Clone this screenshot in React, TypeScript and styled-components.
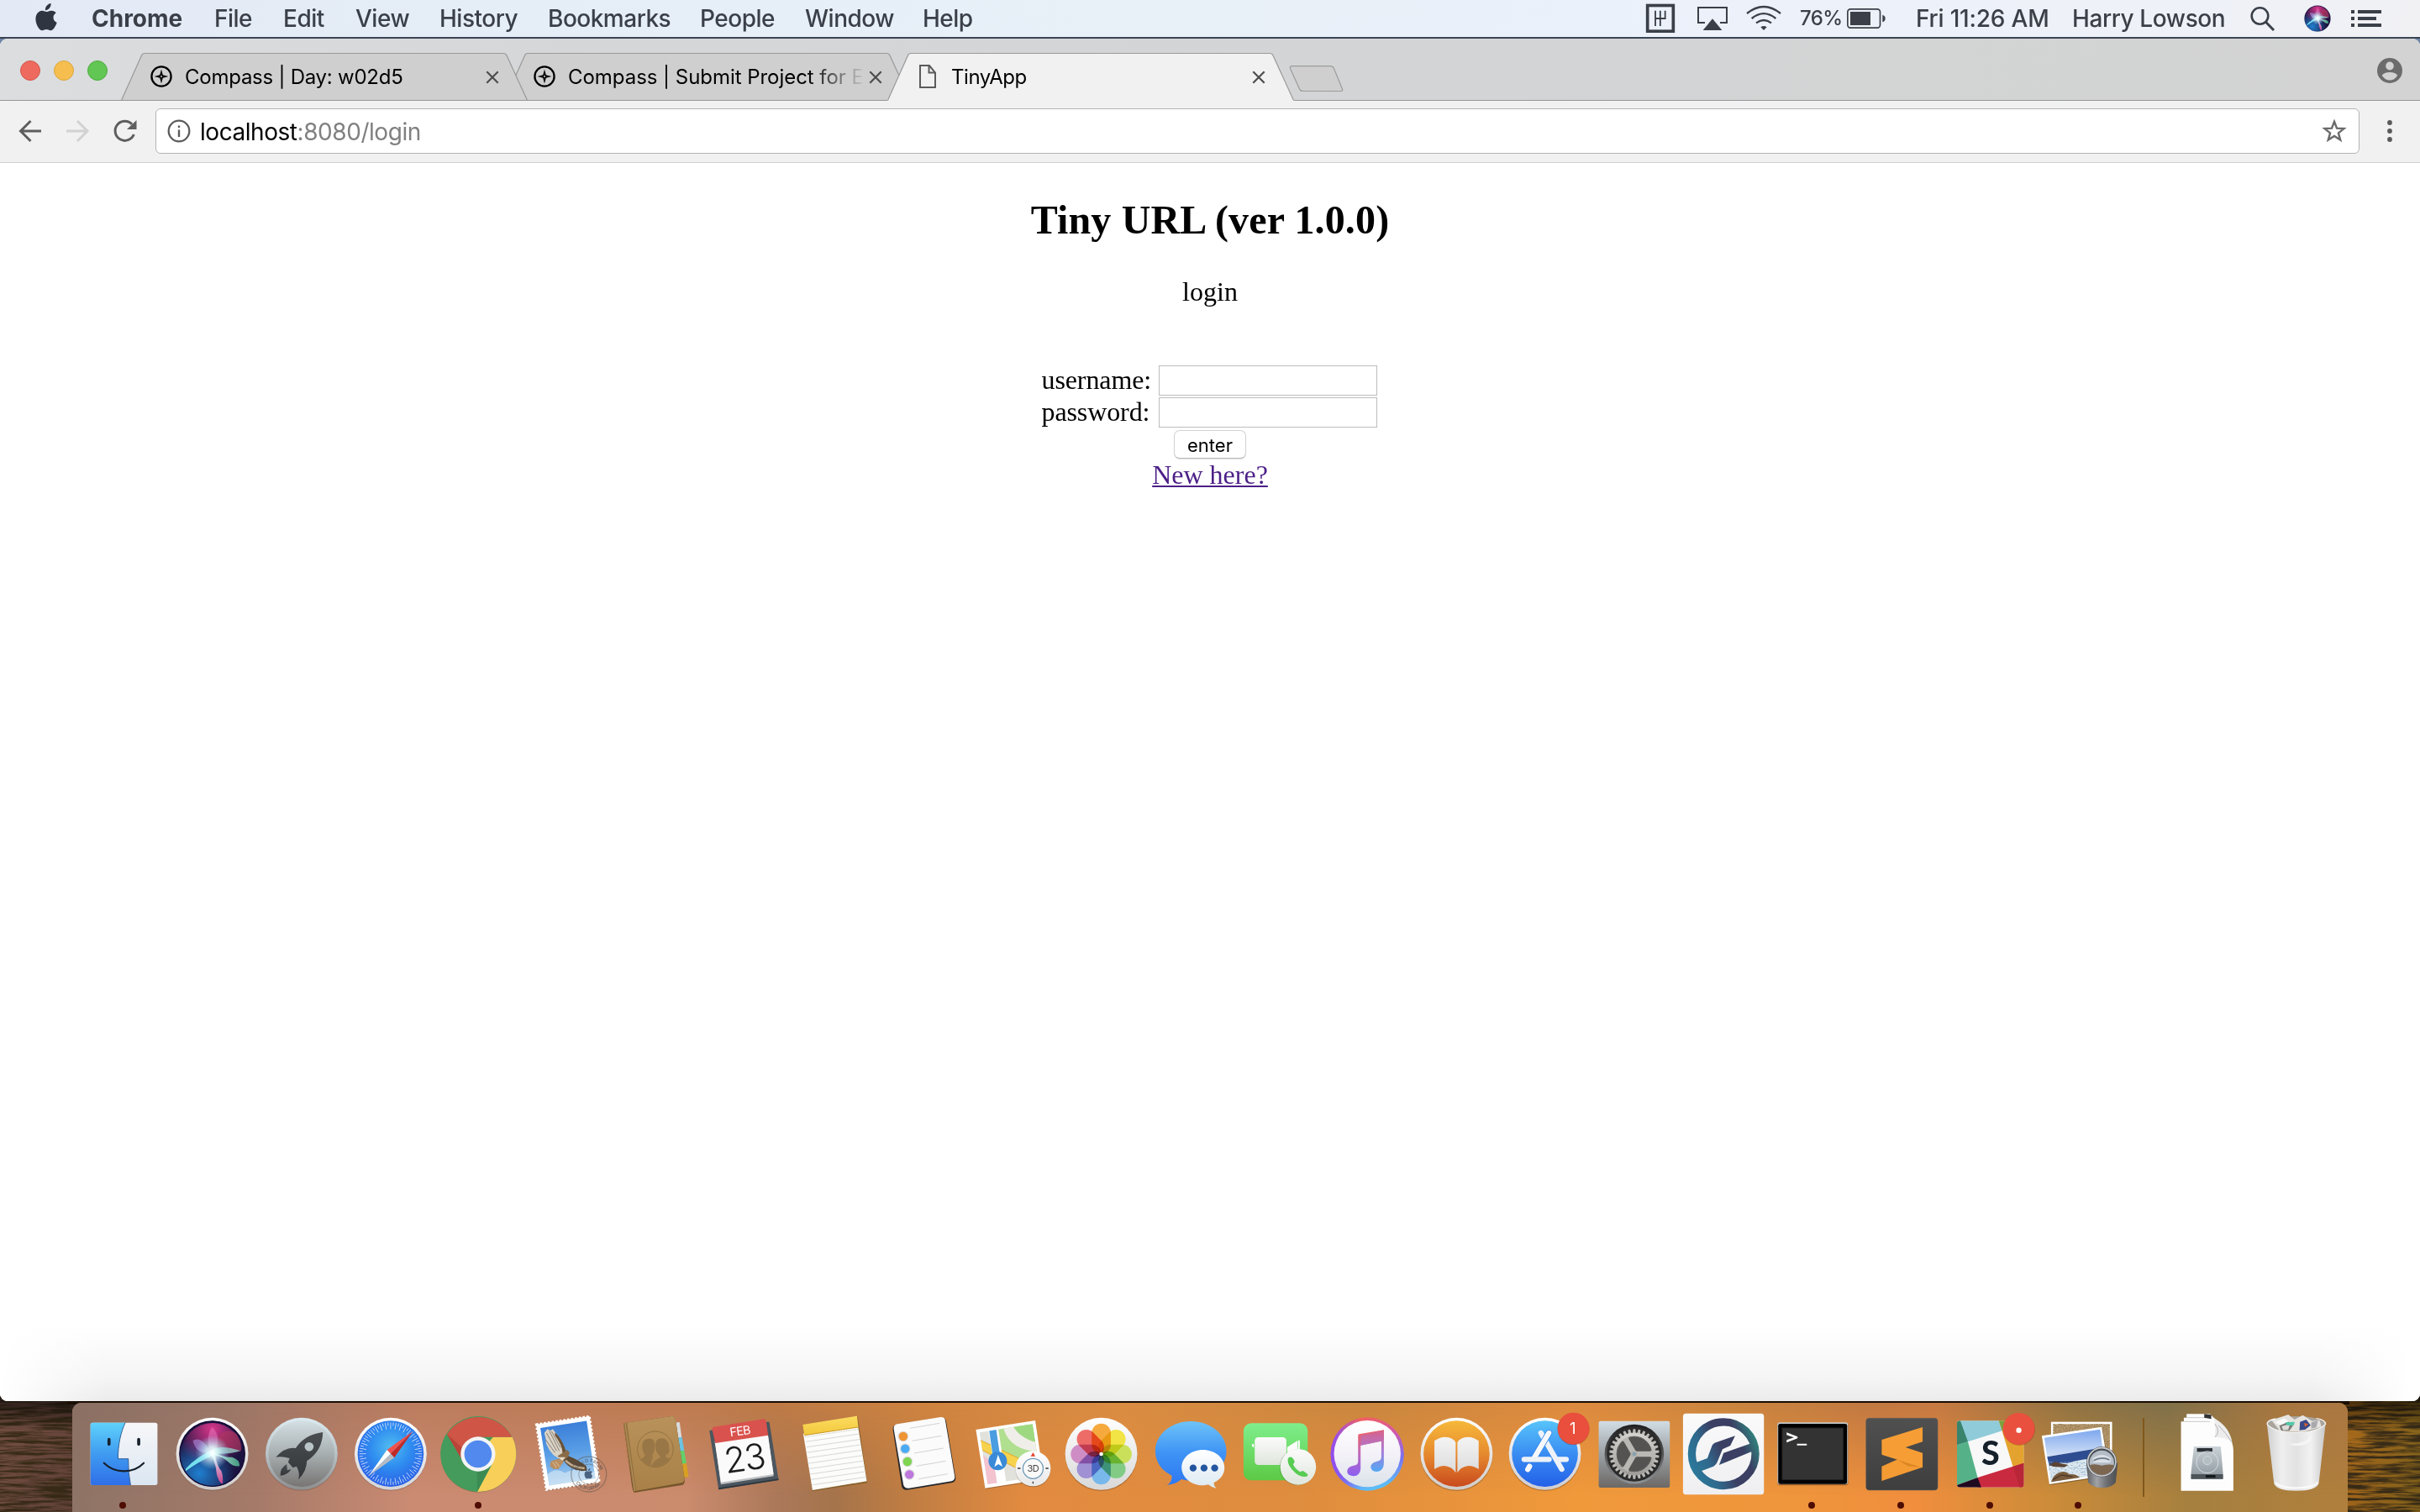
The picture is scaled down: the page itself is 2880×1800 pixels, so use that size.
import React from "react";
import styled, { createGlobalStyle } from "styled-components";

const ui = `Inter, "Liberation Sans", sans-serif`;
const serif = `"Liberation Serif", serif`;
const ink = "#3a3f48";

const Global = createGlobalStyle`
  *, *::before, *::after { box-sizing: border-box; }
  html, body { margin: 0; padding: 0; overflow: hidden; background: #2a1c14; }
  svg { display: block; overflow: visible; }
`;

const Desktop = styled.div`
  position: relative;
  width: 2880px;
  height: 1800px;
  overflow: hidden;
  display: flex;
  flex-direction: column;
  background: linear-gradient(90deg, #6f87a8 0, #1d2530 10%, #1d2530 90%, #6f87a8 100%) 0 0 / 100% 70px no-repeat, #1a0f08;
`;

const Wallpaper = styled.svg`
  position: absolute;
  left: 0;
  bottom: 0;
`;

/* ---------- menu bar ---------- */

const MenuBar = styled.header`
  position: relative;
  flex: none;
  height: 46px;
  display: flex;
  align-items: flex-start;
  background: linear-gradient(90deg, #e3eaf6 0, #e5edf6 20%, #e8f0f8 50%, #ecf1fa 72%, #eef1f8 90%, #f1f1f4 100%);
  border-bottom: 2px solid #3b4453;
  color: ${ink};
  font-family: ${ui};
  font-size: 28px;
  font-weight: 450;
  line-height: 44px;
  white-space: nowrap;
`;

const MenuLead = styled.div`
  flex: none;
  width: 109px;
  height: 44px;
  padding: 4px 0 0 42px;
`;

const MenuItem = styled.div<{ $w: number; $bold?: boolean }>`
  flex: none;
  width: ${(p) => p.$w}px;
  font-weight: ${(p) => (p.$bold ? 700 : 450)};
  letter-spacing: ${(p) => (p.$bold ? 0 : -0.5)}px;
`;

const Status = styled.div<{ $w: number; $size?: number; $ls?: number }>`
  flex: none;
  width: ${(p) => p.$w}px;
  height: 44px;
  font-size: ${(p) => p.$size ?? 28}px;
  letter-spacing: ${(p) => p.$ls ?? 0}px;
`;

const StatusArea = styled.div`
  display: flex;
  margin-left: auto;
`;

/* ---------- browser window ---------- */

const Window = styled.main`
  position: relative;
  flex: none;
  height: 1622px;
  display: flex;
  flex-direction: column;
  border-radius: 9px;
  overflow: hidden;
  background: #fff;
`;

const TabStrip = styled.div`
  flex: none;
  height: 74px;
  display: flex;
  align-items: flex-end;
  justify-content: space-between;
  background: linear-gradient(90deg, #dbdddf 0, #d5d6d8 25%, #d3d4d5 60%, #d2d3d2 100%);
  box-shadow: inset 0 -1px 0 #979797;
`;

const TrafficLights = styled.div`
  display: flex;
  gap: 16px;
  width: 144px;
  padding: 0 0 24px 24px;
`;

const Light = styled.span<{ $fill: string; $edge: string }>`
  width: 24px;
  height: 24px;
  border-radius: 50%;
  background: ${(p) => p.$fill};
  border: 1px solid ${(p) => p.$edge};
`;

const Tabs = styled.div`
  display: flex;
  align-items: flex-end;
  margin-right: auto;
`;

const Tab = styled.div<{ $z: number }>`
  position: relative;
  z-index: ${(p) => p.$z};
  width: 484px;
  height: 57px;
  margin-right: -28px;
  display: flex;
  align-items: center;
  font-family: ${ui};
  font-size: 24px;
  font-weight: 420;
  line-height: 58px;
  color: #000;
`;

const TabShape = styled.svg`
  position: absolute;
  inset: 0;
`;

const Favicon = styled.div`
  position: relative;
  flex: none;
  width: 41px;
  margin-left: 35px;
`;

const TabTitle = styled.div<{ $fade?: boolean; $ls: number }>`
  position: relative;
  flex: none;
  width: 350px;
  white-space: nowrap;
  letter-spacing: ${(p) => p.$ls}px;
  ${(p) => (p.$fade ? "mask-image: linear-gradient(90deg, #000 285px, transparent 354px);" : "")}
`;

const TabClose = styled.svg`
  position: relative;
  flex: none;
  margin-left: 8px;
`;

const NewTab = styled.svg`
  margin: 0 0 10px 22px;
`;

const Profile = styled.div`
  padding: 0 21px 21px 0;
`;

const Toolbar = styled.div`
  flex: none;
  height: 74px;
  display: flex;
  align-items: center;
  padding: 0 0 2px 0;
  background: #f1f1f1;
  border-bottom: 1px solid #d0d0d0;
`;

const NavButton = styled.div<{ $w: number }>`
  flex: none;
  width: ${(p) => p.$w}px;
`;

const Omnibox = styled.div`
  flex: none;
  width: 2623px;
  height: 54px;
  display: flex;
  align-items: center;
  padding: 0 14px 0 13px;
  border: 1px solid #b4b4b4;
  border-radius: 6px;
  background: #fff;
  font-family: ${ui};
  font-size: 28px;
  font-weight: 420;
  letter-spacing: -0.45px;
  color: #000;
`;

const Address = styled.div`
  flex: 1;
  padding: 2px 0 0 11px;
`;

const Muted = styled.span`
  color: #808080;
`;

const Page = styled.section`
  flex: 1;
  display: flex;
  flex-direction: column;
  align-items: center;
  font-family: ${serif};
  font-size: 32px;
  color: #000;
  background: linear-gradient(90deg, #fff 0, rgba(255, 255, 255, 0) 130px, rgba(255, 255, 255, 0) 2750px, #fff 2870px),
    linear-gradient(180deg, #fff 0, #fff calc(100% - 90px), #f5f5f5 calc(100% - 28px), #ebebeb 100%);
`;

const Title = styled.h2`
  margin: 40px 0 0;
  font-size: 48px;
  line-height: 56px;
  font-weight: 700;
  letter-spacing: 0.15px;
`;

const Lead = styled.p`
  margin: 39px 0 69px;
  line-height: 36px;
`;

const Form = styled.form`
  display: flex;
  flex-direction: column;
  align-items: center;
`;

const FieldRow = styled.label`
  display: flex;
  align-items: center;
  height: 38px;
  line-height: 36px;
`;

const FieldName = styled.span`
  width: 139px;
  padding-bottom: 3px;
  letter-spacing: -0.1px;
  text-align: left;
  white-space: nowrap;
`;

const Input = styled.input`
  width: 260px;
  height: 36px;
  margin: 0 2px 0 0;
  padding: 0;
  border: 1px solid #bdbdbd;
  border-radius: 0;
  background: #fff;
  outline: none;
`;

const Submit = styled.button`
  width: 86px;
  height: 34px;
  margin: 2px 0 0;
  padding: 0;
  border: 1px solid #d2d2d2;
  border-bottom-color: #b8b8b8;
  border-radius: 7px;
  background: #fff;
  box-shadow: 0 1px 1px rgba(0, 0, 0, 0.12);
  font-family: ${ui};
  font-size: 22px;
  font-weight: 400;
  line-height: 34px;
  color: #000;
`;

const Link = styled.a`
  margin-top: 1px;
  line-height: 36px;
  color: #4b1f87;
  text-decoration: underline;
  text-decoration-thickness: 2px;
  text-underline-offset: 2px;
`;

/* ---------- dock ---------- */

const Dock = styled.nav`
  position: relative;
  flex: none;
  width: 2708px;
  height: 130px;
  margin: 2px 0 0 86px;
  padding-left: 7.6px;
  display: flex;
  border-radius: 11px 11px 0 0;
  overflow: hidden;
  background: linear-gradient(90deg, #8e7466 0, #a57a69 8%, #cb8b73 15%, #cb8b6d 27%, #ab785a 31%, #a5744b 33.5%, #ba7b44 36%, #e38b40 42%, #df8d3e 54%, #f0993b 66%, #ef953c 76%, #f08e3d 81%, #cc8c39 87%, #a6803f 93%, #b07f3d 100%);

  &::before {
    content: "";
    position: absolute;
    inset: 0;
    background: linear-gradient(90deg, #8a7063 0, #9b7667 7%, #bb7c5e 15%, #be7b50 27%, #bd7a45 31%, #cf8440 38%, #d98c42 46%, #c9863f 57%, #dc8a3f 66%, #c8843f 73%, #c07842 79%, #c57a42 82%, #8f7343 88%, #80704a 92%, #a67640 97%, #ab7742 100%);
    mask-image: linear-gradient(180deg, #000 0, transparent 85%);
  }
`;

const DockSlot = styled.div`
  position: relative;
  flex: none;
  width: 105.8px;
  height: 130px;
`;

const Running = styled.span`
  position: absolute;
  left: 48.2px;
  bottom: 4px;
  width: 8px;
  height: 8px;
  border-radius: 50%;
  background: #4e0d02;
`;

const Divider = styled.div`
  position: relative;
  flex: none;
  width: 2px;
  height: 94px;
  margin: 18px 22.3px 0 22.8px;
  background: #80581c;
`;

/* ---------- menu bar glyphs ---------- */

const applePath =
  "M18.6 0c.3 2.200-.6 4.300-1.800 5.800-1.200 1.500-3.100 2.500-4.900 2.400-.3-2.100.7-4.200 1.800-5.500C15 1.200 17 .2 18.600 0zM24.800 11.300c-2.200 1.400-3.300 3.200-3.300 5.500 0 2.700 1.500 5 4.200 6.200-.6 1.900-1.500 3.700-2.700 5.400-1.300 1.900-2.600 3.800-4.700 3.800-2 .1-2.700-1.200-5-1.200-2.400 0-3.100 1.200-5 1.200-2.100.1-3.600-1.900-4.900-3.800C.600 24.400-.9 17.100 2 12.500c1.400-2.300 3.700-3.700 6.200-3.700 2 0 3.900 1.300 5.200 1.300 1.200 0 3.500-1.600 6-1.400 1.700.1 4 .7 5.400 2.600z";

const Apple = () => (
  <svg width="27" height="33" viewBox="0 0 27 33" fill="#2f3541">
    <path d={applePath} />
  </svg>
);

const StatusGlyphs = () => (
  <svg width="183" height="44" viewBox="0 0 549 132" fill="none" stroke={ink}>
    <rect x="62" y="19.500" width="92" height="92" strokeWidth="11" />
    <path d="M90 38v55M107.500 38v55M125 38v28H90" strokeWidth="5.500" />
    <path d="M267 81H243V27H345V81H321" strokeWidth="6" />
    <path d="M294 67L328 108H260Z" fill={ink} stroke="none" />
    <path d="M417 48Q477 0 537 48M434 66Q477 31 520 66M450 82Q477 62 504 82" strokeWidth="7" />
    <path d="M466 97Q477 89 488 97L477 108Z" fill={ink} stroke="none" />
  </svg>
);

const Battery = () => (
  <svg width="46" height="44" viewBox="0 0 138 132">
    <rect x="2.500" y="32.500" width="116" height="67" rx="10" fill="none" stroke={ink} strokeWidth="5" />
    <rect x="12" y="42" width="72" height="48" fill={ink} />
    <path d="M127 53Q137 56 137 66Q137 76 127 79Z" fill={ink} />
  </svg>
);

const Search = () => (
  <svg width="30" height="44" viewBox="0 0 30 44" fill="none" stroke={ink} strokeWidth="2.600">
    <circle cx="11.500" cy="19" r="9.800" />
    <path d="M18.300 26L28 36" strokeWidth="3" />
  </svg>
);

const MenuList = () => (
  <svg width="36" height="44" viewBox="0 0 36 44" fill={ink}>
    <path d="M0 12h4v4H0zM8 12h28v4H8zM0 20h4v4H0zM8 20h22v4H8zM0 28h4v4H0zM8 28h28v4H8z" />
  </svg>
);

/* ---------- browser glyphs ---------- */

const Compass = () => (
  <svg width="26" height="27" viewBox="-13 -13 26 27">
    <circle r="11.600" fill="none" stroke="#000" strokeWidth="2.300" />
    <path d="M0-8.500L1.800-1.800L8.500 0L1.800 1.800L0 8.500L-1.800 1.800L-8.500 0L-1.800-1.800Z" />
    <circle r="1" fill="#cfcfcf" />
  </svg>
);

const Doc = () => (
  <svg width="26" height="29" viewBox="-3 0 26 29" fill="none" stroke="#5b5b5b" strokeWidth="2">
    <path d="M1 1H12L19 9.500V27H1ZM11.500 1V9.500H19" />
  </svg>
);

const Cross = () => (
  <TabClose width="16" height="16" viewBox="0 0 16 16" stroke="#4d4d4d" strokeWidth="2.200">
    <path d="M1.300 1.300L14.700 14.700M14.700 1.300L1.300 14.700" />
  </TabClose>
);

const TabBody = ({ active }: { active?: boolean }) => (
  <TabShape width="484" height="57" viewBox="0 0 484 57">
    <path
      d="M0 57L1 55L24.500 3Q25.500 .5 28 .5H455Q458 .5 459 3L483 55L484 57Z"
      fill={active ? "#f1f1f1" : "#cfcfcf"}
    />
    <path
      d="M.5 56.500L24.500 3Q25.500 .5 28 .5H455Q458 .5 459 3L483.500 56.500"
      fill="none"
      stroke="#999"
      strokeWidth="1.200"
    />
    {!active && <path d="M0 56.500H484" stroke="#979797" />}
  </TabShape>
);

const Star = () => (
  <svg width="30" height="30" viewBox="0 0 30 30" fill="none" stroke="#6a6a6a" strokeWidth="2.400">
    <path d="M15 3.800L18 11.700L26.500 12.100L19.900 17.400L22.200 25.600L15 20.900L7.800 25.600L10.100 17.400L3.500 12.100L12 11.700Z" />
  </svg>
);

/* ---------- dock icons ---------- */

const IconSvg = styled.svg`
  position: relative;
`;

type IconProps = { cx: number; children: React.ReactNode };

const Icon = ({ cx, children }: IconProps) => (
  <IconSvg width="105.8" height="130" viewBox={`${cx - 158.7} 90 317.4 390`}>
    {children}
  </IconSvg>
);

const Stops = ({ c }: { c: string[] }) => (
  <>
    {c.map((color, i) => (
      <stop key={i} offset={i / (c.length - 1)} stopColor={color} />
    ))}
  </>
);

const V = ({ id, c }: { id: string; c: string[] }) => (
  <linearGradient id={id} x1="0" y1="0" x2="0" y2="1">
    <Stops c={c} />
  </linearGradient>
);

const Finder = () => (
  <Icon cx={439.5}>
    <V id="fa" c={["#5fd2fb", "#3f9bf0", "#2f6fe9"]} />
    <V id="fb" c={["#f7f7f9", "#dbe6f2"]} />
    <rect x="322" y="161" width="239" height="223" rx="8" fill="url(#fb)" />
    <path d="M330 161H446C430 195 420 240 420 290H457Q456 340 465 384H330Q322 384 322 376V169Q322 161 330 161Z" fill="url(#fa)" />
    <path d="M446 161C430 195 420 240 420 290H457Q456 340 465 384" fill="none" stroke="#1e4b80" strokeWidth="2.500" />
    <path d="M388 221V238M494 221V238" stroke="#16202c" strokeWidth="11" strokeLinecap="round" />
    <path d="M370 305Q400 334 441 334Q484 334 512 305" fill="none" stroke="#16202c" strokeWidth="6.500" strokeLinecap="round" />
  </Icon>
);

const SiriArt = () => (
  <>
    <defs>
      <radialGradient id="s1" cx=".5" cy=".1" r=".6"><stop offset="0" stopColor="#d8368a" /><stop offset="1" stopColor="#d8368a" stopOpacity="0" /></radialGradient>
      <radialGradient id="s2" cx=".3" cy=".8" r=".55"><stop offset="0" stopColor="#1f7fd0" /><stop offset="1" stopColor="#1f7fd0" stopOpacity="0" /></radialGradient>
      <radialGradient id="s3" cx=".5" cy=".48" r=".26"><stop offset="0" stopColor="#fff" /><stop offset=".35" stopColor="#dff" stopOpacity=".8" /><stop offset="1" stopColor="#9df" stopOpacity="0" /></radialGradient>
      <linearGradient id="s4" x1="0" x2="1"><stop offset="0" stopColor="#d8fff8" /><stop offset="1" stopColor="#47a886" /></linearGradient>
      <linearGradient id="s5" x1="0" y1="0" x2="0" y2="1"><stop offset="0" stopColor="#fff" /><stop offset="1" stopColor="#d5408f" /></linearGradient>
    </defs>
    <circle cx="759" cy="272" r="117" fill="#1c1440" />
    <circle cx="759" cy="272" r="117" fill="url(#s2)" />
    <circle cx="759" cy="272" r="110" fill="url(#s1)" />
    <path d="M759 268C770 210 800 170 845 200Q865 230 862 262Q810 275 759 268Z" fill="#b0355f" opacity=".65" />
    <path d="M755 268Q700 275 690 225Q720 205 755 268Z" fill="#a890e0" opacity=".6" />
    <path d="M757 268C735 235 745 190 760 178C785 200 785 240 764 270Z" fill="#e070b8" opacity=".6" />
    <path d="M664 326Q700 285 760 258L766 276Q710 300 664 334Z" fill="#7ff0f5" opacity=".9" />
    <path d="M760 266Q800 285 830 284Q860 295 856 316Q835 320 815 300Q795 280 756 276Z" fill="url(#s4)" opacity=".9" />
    <path d="M760 255Q800 240 860 262Q820 275 760 272Z" fill="#8feee0" opacity=".65" />
    <path d="M750 270Q772 300 775 345Q782 375 796 380Q800 340 785 325Q772 300 768 268Z" fill="url(#s5)" opacity=".9" />
    <circle cx="759" cy="272" r="117" fill="url(#s3)" />
  </>
);

const Siri = () => (
  <Icon cx={757}>
    <V id="sr" c={["#fff", "#cfcbc9"]} />
    <circle cx="759" cy="275" r="129" fill="#5b4038" opacity=".35" />
    <circle cx="759" cy="272" r="129" fill="url(#sr)" />
    <SiriArt />
    <circle cx="759" cy="272" r="116" fill="none" stroke="#140a36" strokeWidth="4" />
  </Icon>
);

const Launchpad = () => (
  <Icon cx={1074}>
    <V id="lr" c={["#dcebf2", "#b9c3c7", "#8e8e8e"]} />
    <V id="lf" c={["#d3dfe3", "#a8afb1", "#777573"]} />
    <V id="lk" c={["#4a4e51", "#34373a"]} />
    <circle cx="1077" cy="275" r="129" fill="#5b4038" opacity=".35" />
    <circle cx="1077" cy="272" r="129" fill="url(#lr)" />
    <circle cx="1077" cy="272" r="118" fill="url(#lf)" />
    <path d="M1153 195C1110 200 1075 222 1056 252Q1020 245 985 284Q1008 280 1034 288L1029 302L1046 322L1059 317Q1072 340 1066 364Q1095 335 1096 298C1132 275 1152 240 1153 195Z" fill="url(#lk)" />
    <path d="M1024 309Q1000 322 1001 350Q1028 348 1040 327L1026 331Z" fill="url(#lk)" />
    <circle cx="1104" cy="247" r="16" fill="#b8c4c8" />
  </Icon>
);

const Safari = () => (
  <Icon cx={1392}>
    <V id="sf" c={["#fff", "#d5d5d8"]} />
    <radialGradient id="sg" cx=".5" cy=".4" r=".6"><Stops c={["#52bdf0", "#2f8df0", "#2a5fe6"]} /></radialGradient>
    <circle cx="1395" cy="275" r="129" fill="#5b4038" opacity=".35" />
    <circle cx="1395" cy="272" r="129" fill="url(#sf)" />
    <circle cx="1395" cy="272" r="118" fill="url(#sg)" />
    {Array.from({ length: 72 }, (_, i) => (
      <path key={i} d={`M1395 160V${i % 2 ? 172 : 184}`} stroke="#e6f2ff" strokeWidth="2.600" opacity=".85" transform={`rotate(${i * 5} 1395 272)`} />
    ))}
    <path d="M1474 192L1382 258L1395 272Z" fill="#f2524c" />
    <path d="M1474 192L1408 286L1395 272Z" fill="#c22a25" />
    <path d="M1316 352L1382 258L1395 272Z" fill="#fff" />
    <path d="M1316 352L1408 286L1395 272Z" fill="#b9bcc2" />
  </Icon>
);

const Chrome = () => (
  <Icon cx={269}>
    <circle cx="267" cy="276" r="134" fill="#5b3020" opacity=".3" />
    <circle cx="267" cy="273" r="135" fill="#449b5c" />
    <path d="M267 273L320 212H388Q402 240 402 273A135 135 0 0 1 263 408L318 303Z" fill="#f7cf59" />
    <path d="M263 408L316 310L267 320L225 300L236 340Z" fill="#449b5c" />
    <path d="M155 202A135 135 0 0 1 387 212H267L208 292Z" fill="#cf5546" />
    <path d="M155 202L208 292L214 255Z" fill="#b94438" />
    <path d="M263 408L318 303L300 325L262 338Z" fill="#37804c" opacity=".6" />
    <circle cx="266" cy="273" r="62" fill="#f4f4f4" />
    <circle cx="266" cy="273" r="49" fill="#5189ee" />
  </Icon>
);

const Mail = () => (
  <Icon cx={586.5}>
    <V id="ma" c={["#3b7fd9", "#5a9fe6", "#a5cdee"]} />
    <g transform="translate(586 272) rotate(-8.700)">
      <rect x="-98" y="-118" width="196" height="238" fill="#4a2a1a" opacity=".25" />
      <rect x="-96" y="-121" width="193" height="237" fill="#fff" stroke="#fff" strokeWidth="7" strokeDasharray="8 6" />
      <rect x="-83" y="-106" width="167" height="208" fill="url(#ma)" />
      <path d="M-83 62Q-50 40-20 66Q20 50 84 78V102H-83Z" fill="#dcebf6" opacity=".6" />
    </g>
    <path d="M513 184L502 198L507 216L509 236L520 258L534 276L552 288L580 268Q572 236 550 206L532 184L524 190Z" fill="#d9d3c8" />
    <path d="M540 196L552 208Q572 236 580 264L568 272Q566 240 540 206Z" fill="#6a5238" />
    <path d="M510 198L546 262M520 190L556 262M507 222L540 268M528 192L560 250" stroke="#8b7f70" strokeWidth="3" />
    <path d="M570 294Q584 318 612 328L636 334L655 332L652 316Q624 294 588 280Z" fill="#5d4a35" />
    <path d="M578 296Q596 314 620 320L646 324" fill="none" stroke="#c0ad90" strokeWidth="8" />
    <path d="M560 288L526 298L522 316L534 326L552 327L572 300Z" fill="#b98f62" />
    <path d="M532 302L546 322M542 300L556 318" stroke="#e2c49c" strokeWidth="3" />
    <path d="M550 280L572 266L584 258L593 268L586 284L566 300Z" fill="#8a6b48" />
    <path d="M552 284L578 284L566 298Z" fill="#e6dccb" />
    <g fill="none" stroke="#55504e" opacity=".45">
      <circle cx="661" cy="345" r="63" strokeWidth="4" />
      <circle cx="661" cy="345" r="36" strokeWidth="3" />
      <path id="cal" d="M618 345A43 43 0 1 1 704 345" stroke="none" />
      <path id="cal2" d="M605 345A56 56 0 0 0 717 345" stroke="none" />
    </g>
    <g fill="#47474c" opacity=".6" fontFamily={ui} fontWeight="700" fontSize="17">
      <text><textPath href="#cal" startOffset="12">HELLO FROM</textPath></text>
      <text><textPath href="#cal2" startOffset="32">CALIFORNIA</textPath></text>
    </g>
    <path d={applePath} transform="translate(645 324) scale(1.150)" fill="#2d4566" opacity=".8" />
  </Icon>
);

const Contacts = () => (
  <Icon cx={904}>
    <V id="ca" c={["#b8925a", "#a88048"]} />
    <path d="M975 160L988 160L995 213L982 216Z" fill="#d9dbdc" />
    <path d="M982 214L996 212L1004 260L988 264Z" fill="#6cc3e2" />
    <path d="M988 262L1004 260L1012 306L994 310Z" fill="#63cf6b" />
    <path d="M994 309L1012 306L1020 354L1000 358Z" fill="#d9a022" />
    <path d="M787 163L958 138Q970 137 973 150L1006 366Q1007 380 996 384L826 411Q820 405 817 385Z" fill="#76562c" />
    <path d="M787 163L958 138Q970 137 973 150L1005 360Q1006 372 994 376L824 406Z" fill="url(#ca)" />
    <path d="M787 163L800 161L833 404L824 406Z" fill="#94713f" />
    <path d="M793 162L828 405" stroke="#b8935c" strokeWidth="3" />
    <circle cx="901" cy="256" r="64" fill="none" stroke="#94723f" strokeWidth="3" />
    <clipPath id="cc"><circle cx="901" cy="256" r="62" /></clipPath>
    <g clipPath="url(#cc)" fill="#987646">
      <path d="M876 218Q900 216 900 244Q898 268 890 276L892 286Q886 296 884 320H838V296Q862 288 864 276Q854 262 854 244Q854 220 876 218Z" />
      <path d="M902 250Q898 216 926 217Q950 220 950 252Q954 268 944 274L938 276L938 284Q960 290 970 296V330H886Q884 300 918 286L914 276Q903 268 902 250Z" />
    </g>
  </Icon>
);

const Calendar = () => (
  <Icon cx={1221}>
    <path d="M1093 190L1104 187L1300 158H1307L1340 366L1126 400Z" fill="#4c565f" />
    <path d="M1126 400L1340 366V361L1125 394Z" fill="#2e3840" />
    <path d="M1114 232L1302 206L1322 345V352L1134 382Z" fill="#bfc0c2" />
    <path d="M1112 228L1302 203L1322 345L1134 374Z" fill="#fafafa" />
    <path d="M1103 186Q1102 177 1110 176L1286 148Q1293 147 1295 153L1303 206L1114 234Z" fill="#d9524e" />
    <g fontFamily={ui} textAnchor="middle" transform="translate(1216 275) rotate(-8)">
      <text x="-2" y="-70" fontSize="43" letterSpacing="-2" fill="#fff">FEB</text>
      <text x="0" y="58" fontSize="126" fontWeight="300" letterSpacing="-4" fill="#1c1c1c">23</text>
    </g>
  </Icon>
);

const Notes = () => (
  <Icon cx={219}>
    <V id="na" c={["#fbdc60", "#f3c83c"]} />
    <path d="M106 170L112 210L141 406L337 376L303 140Z" fill="#7a5a20" opacity=".7" />
    <path d="M108 200L304 176L335 370L141 402Z" fill="#fcfcfa" />
    <path d="M106 168L300 137L305 176L112 206Z" fill="url(#na)" />
    <path d="M112 206L305 177" stroke="#c8971d" strokeWidth="3" />
    <path d="M114 212L306 184" stroke="#a8a08c" strokeWidth="2.500" strokeDasharray="2.500 4" />
    {[0, 1, 2, 3, 4, 5, 6, 7, 8].map((i) => (
      <path key={i} d={`M${117 + i * 2.7} ${229 + i * 19.3}L${309 + i * 2.7} ${201 + i * 19.3}`} stroke="#c4c4c4" strokeWidth="2" />
    ))}
  </Icon>
);

const Reminders = () => (
  <Icon cx={536}>
    <path d="M440 168L602 143Q614 143 617 155L651 358Q652 370 640 375L478 401Q463 402 459 390L427 185Q426 172 440 168Z" fill="#26282c" />
    <path d="M443 166L598 141Q611 140 614 152L648 353Q649 366 637 370L484 395Q469 396 465 384L430 182Q430 168 443 166Z" fill="#fbfbfb" />
    {[
      ["#ef9433", 464, 210],
      ["#4aaaf3", 471, 254],
      ["#7fd551", 479, 300],
      ["#bd77dd", 486, 346],
    ].map(([c, x, y]) => (
      <g key={c as string}>
        <circle cx={x} cy={y} r="19" fill="#dcdcdc" />
        <circle cx={x} cy={y} r="15.500" fill={c as string} />
        <path d={`M${+x + 32} ${+y + 16}l105-18`} stroke="#bdbdbd" strokeWidth="2" />
      </g>
    ))}
    <path d="M488 181L594 163" stroke="#bdbdbd" strokeWidth="2" />
  </Icon>
);

const Maps = () => (
  <Icon cx={853.5}>
    <path d="M725 188L935 156L966 366L757 398Z" fill="#5a3a18" opacity=".4" />
    <path d="M723 186L935 153L966 362L756 395Z" fill="#fff" />
    <clipPath id="mc"><path d="M736 196L925 166L953 352L765 381Z" /></clipPath>
    <g clipPath="url(#mc)">
      <rect x="720" y="150" width="250" height="250" fill="#e2e2dc" />
      <path d="M800 160H970V300H870L815 260Z" fill="#b1df90" />
      <path d="M822 184Q850 270 970 264V234Q890 236 855 160Z" fill="#f0eee8" />
      <path d="M855 170Q880 225 970 234V150H850Z" fill="#9ed982" />
      <path d="M740 270L790 310L800 400H750Z" fill="#f3c3cf" />
      <path d="M736 222L880 290V330L740 256Z" fill="#f7d24c" stroke="#e0aa30" strokeWidth="3" />
      <path d="M766 180L800 380L832 380L802 180Z" fill="#fff" />
      <path d="M770 185L795 182L808 270H782Z" fill="#4a9de0" />
    </g>
    <circle cx="801" cy="298" r="33" fill="#3a8ad8" />
    <path d="M802 275L818 318L803 309L789 319Z" fill="#fff" />
    <circle cx="927" cy="328" r="63" fill="#5a3a18" opacity=".4" />
    <V id="mv" c={["#fff", "#e8e8e8"]} />
    <circle cx="927" cy="325" r="63" fill="url(#mv)" />
    <circle cx="927" cy="325" r="36" fill="#fafafa" stroke="#6f9ab8" strokeWidth="4" />
    <path d="M927 267L935 281H919Z" fill="#e8402c" />
    <path d="M872 324H882M972 324H982M927 371V379" stroke="#333" strokeWidth="4" />
    <text x="927" y="337" fontFamily={ui} fontSize="33" letterSpacing="-1.500" textAnchor="middle" fill="#444">3D</text>
  </Icon>
);

const petals = ["#f6aa3e", "#f1e444", "#cbe05a", "#82cb84", "#78b8ea", "#a090d4", "#cf8dc5", "#ee6c68"];

const PhotoGroup = styled.g`
  isolation: isolate;
`;

const Petal = styled.rect`
  mix-blend-mode: multiply;
`;

const Photos = () => (
  <Icon cx={1171}>
    <V id="pa" c={["#fff", "#d8d8d8"]} />
    <circle cx="1173" cy="276" r="129" fill="#5a3a18" opacity=".35" />
    <circle cx="1173" cy="272" r="129" fill="url(#pa)" />
    <PhotoGroup>
      {petals.map((c, i) => (
        <Petal key={c} x="1139" y="164" width="68" height="109" rx="34" fill={c} transform={`rotate(${i * 45} 1173 273)`} />
      ))}
    </PhotoGroup>
    <circle cx="1173" cy="273" r="7" fill="#fff" />
  </Icon>
);

const Messages = () => (
  <Icon cx={228}>
    <V id="mg" c={["#6ec3f8", "#3e93f5", "#2e78f2"]} />
    <V id="mh" c={["#fff", "#dce9f2"]} />
    <path d="M232 156C302 156 359 203 359 262C359 321 302 368 232 368Q215 368 198 363Q180 380 147 384Q166 372 164 350C126 332 105 300 105 262C105 203 162 156 232 156Z" fill="url(#mg)" />
    <path d="M275 258C317 258 352 286 352 321C352 345 338 364 314 375Q314 388 324 396Q306 393 294 382Q285 385 275 385C233 385 199 356 199 321C199 286 233 258 275 258Z" fill="url(#mh)" />
    <g fill="#2456a0">
      <circle cx="240" cy="323" r="12.500" />
      <circle cx="279" cy="323" r="12.500" />
      <circle cx="317" cy="323" r="12.500" />
    </g>
  </Icon>
);

const FaceTime = () => (
  <Icon cx={546}>
    <V id="ft" c={["#7fee8c", "#5cc945"]} />
    <V id="fu" c={["#fbfbfb", "#dfe6dc"]} />
    <rect x="420" y="163" width="229" height="204" rx="27" fill="url(#ft)" />
    <rect x="460" y="213" width="113" height="99" rx="13" fill="url(#fu)" />
    <path d="M576 248L613 225V270L576 268ZM615 224H621V262H615ZM450 238Q456 235 457 237V250Q450 250 450 238Z" fill="#fbfbfb" />
    <circle cx="613" cy="320" r="64" fill="#24601c" opacity=".4" />
    <circle cx="615" cy="319" r="64" fill="url(#fu)" />
    <path d="M584 284Q594 280 602 298Q604 304 597 310Q604 326 622 337Q628 332 634 334L649 345Q652 350 645 353Q628 358 606 341Q575 314 578 290Q580 286 584 284Z" fill="#58cc53" />
  </Icon>
);

const ITunes = () => (
  <Icon cx={863}>
    <linearGradient id="ia" x1=".35" y1="0" x2=".6" y2="1"><Stops c={["#f4605a", "#d05ab0", "#7a70f0", "#58c6f8"]} /></linearGradient>
    <linearGradient id="ic" x1="0" y1="0" x2="1" y2="0"><stop offset="0" stopColor="#8e4df0" /><stop offset=".4" stopColor="#8e4df0" stopOpacity="0" /></linearGradient>
    <V id="ib" c={["#fff", "#f4f2f8", "#dbe3ea"]} />
    <linearGradient id="id" gradientUnits="userSpaceOnUse" x1="850" y1="190" x2="840" y2="350"><Stops c={["#f06060", "#c06ab8", "#8d60f0"]} /></linearGradient>
    <linearGradient id="ie" gradientUnits="userSpaceOnUse" x1="900" y1="190" x2="900" y2="335"><Stops c={["#d8628c", "#a87ad8", "#52a8f4"]} /></linearGradient>
    <circle cx="861" cy="273" r="131" fill="url(#ia)" />
    <circle cx="861" cy="273" r="131" fill="url(#ic)" />
    <circle cx="861" cy="272" r="119" fill="url(#ib)" />
    <path d="M828 206Q828 203 832 202L920 187V224L837 242V326Q836 350 810 352Q789 350 789 334Q790 318 812 314Q828 312 828 300Z" fill="url(#id)" />
    <path d="M838 206L915 188Q920 187 920 194V306Q920 334 894 336Q873 334 873 318Q874 304 896 299Q911 296 911 284V227L838 242Z" fill="url(#ie)" />
  </Icon>
);

const IBooks = () => (
  <Icon cx={1180.5}>
    <V id="ba" c={["#f6b83a", "#e68a2e", "#c94a1e"]} />
    <V id="bb" c={["#fff", "#d0ccc8"]} />
    <V id="bc" c={["#f4f4f4", "#dcdcdc"]} />
    <circle cx="1179" cy="276" r="129" fill="#5a3a18" opacity=".35" />
    <circle cx="1179" cy="272" r="129" fill="url(#bb)" />
    <circle cx="1179" cy="272" r="118" fill="url(#ba)" />
    <path d="M1100 226Q1118 212 1138 212Q1166 212 1176 232V340Q1164 318 1136 315Q1118 315 1100 327ZM1258 226Q1240 212 1220 212Q1192 212 1182 232V340Q1194 318 1222 315Q1240 315 1258 327Z" fill="url(#bc)" />
  </Icon>
);

const AppStore = () => (
  <Icon cx={148}>
    <V id="aa" c={["#57c4fa", "#3a8df2", "#2360e8"]} />
    <V id="ab" c={["#fff", "#d0cdd0"]} />
    <circle cx="147" cy="276" r="129" fill="#5a3a18" opacity=".35" />
    <circle cx="147" cy="272" r="129" fill="url(#ab)" />
    <circle cx="147" cy="272" r="118" fill="url(#aa)" />
    <g fill="none" stroke="#eef2f8" strokeWidth="19" strokeLinecap="round">
      <path d="M133 198L207 327" />
      <path d="M161 198L108 288" stroke="#2f7fe8" strokeWidth="23" />
      <path d="M161 198L108 288M92 317L86 328" stroke="#f6f8fb" />
      <path d="M73 292H162M192 292H223" />
    </g>
    <circle cx="249" cy="184" r="57" fill="#6a2010" opacity=".4" />
    <circle cx="249" cy="182" r="57" fill="#e94f3c" />
    <text x="247" y="202" fontFamily={ui} fontSize="56" textAnchor="middle" fill="#fff">1</text>
  </Icon>
);

const Settings = () => (
  <Icon cx={465}>
    <V id="ga" c={["#d2dde4", "#9aa0a4", "#6c6865"]} />
    <V id="gb" c={["#1c1c1c", "#555", "#8f9498"]} />
    <V id="gc" c={["#d3d1cd", "#a09e9b"]} />
    <rect x="338" y="155" width="254" height="238" rx="7" fill="url(#ga)" />
    <circle cx="465" cy="273" r="106" fill="url(#gb)" />
    <circle cx="465" cy="273" r="98" fill="#2b2b2b" />
    {Array.from({ length: 30 }, (_, i) => (
      <path key={i} d="M459 200L461 184H469L471 200Z" fill="#bcbab6" transform={`rotate(${i * 12} 465 273)`} />
    ))}
    <circle cx="465" cy="273" r="70" fill="#555351" stroke="url(#gc)" strokeWidth="13" />
    <circle cx="465" cy="273" r="62" fill="none" stroke="#6b6967" strokeWidth="2" />
    {[0, 120, 240].map((a) => (
      <path key={a} d="M465 263H522L530 258V288L522 283H465Z" fill="#bab8b4" transform={`rotate(${a} 465 273)`} />
    ))}
    <circle cx="465" cy="273" r="13" fill="#b3b1ae" />
    <circle cx="465" cy="273" r="7" fill="#85a0ac" />
  </Icon>
);

const Orbit = () => (
  <Icon cx={783}>
    <V id="oz" c={["#fafafb", "#efeff1"]} />
    <linearGradient id="oa" gradientUnits="userSpaceOnUse" x1="665" y1="330" x2="910" y2="220"><Stops c={["#2b7a9c", "#2f6a8e", "#3b3f63", "#3b3f63", "#2f8b80"]} /></linearGradient>
    <rect x="639" y="128" width="289" height="290" rx="11" fill="url(#oz)" />
    <circle cx="784" cy="272" r="113.500" fill="none" stroke="url(#oa)" strokeWidth="28" />
    <path d="M686 303L726 288L744 240L752 233L825 208L808 243L780 256L762 300Q758 312 748 317L700 335Z" fill="url(#oa)" />
    <path d="M784 269L884 234L890 262L768 312Z" fill="url(#oa)" />
  </Icon>
);

const Terminal = () => (
  <Icon cx={1100}>
    <rect x="975" y="163" width="253" height="222" rx="9" fill="#5a3010" opacity=".5" />
    <rect x="975" y="160" width="252" height="221" rx="9" fill="#c5c8c8" />
    <rect x="978" y="165" width="246" height="215" rx="7" fill="#000" />
    <rect x="992" y="180" width="218" height="185" fill="#333" stroke="#222" strokeWidth="3" />
    <path d="M1008 196L1047 211V217L1008 232V223L1034 214L1008 205Z" fill="#fff" />
    <path d="M1045 236H1080V242H1045Z" fill="#fff" />
  </Icon>
);

const Sublime = () => (
  <Icon cx={1417.5}>
    <V id="ua" c={["#505050", "#3e3e3e"]} />
    <rect x="1291" y="145" width="256" height="257" rx="11" fill="url(#ua)" stroke="#5f5f5f" strokeWidth="1.500" />
    <path d="M1404 292L1494 320L1347 369V317Z" fill="#f49b34" />
    <path d="M1404 293L1494 321L1440 316Z" fill="#dc8622" />
    <path d="M1493 177V229L1432 249L1493 269V322L1347 275V222Z" fill="#f69e35" />
  </Icon>
);

const Slack = () => (
  <Icon cx={175}>
    <clipPath id="ka"><rect x="58" y="154" width="239" height="238" rx="12" /></clipPath>
    <g clipPath="url(#ka)">
      <rect x="58" y="154" width="239" height="238" fill="#f8f8f8" />
      <path d="M58 154H230L220 190L92 230L58 240Z" fill="#8fcbd8" />
      <path d="M58 241L97 228L132 357L58 384Z" fill="#55b288" />
      <path d="M70 154H58V241L97 228Z" fill="#3a836c" />
      <path d="M208 154H297V306L258 318Z" fill="#e3a32e" />
      <path d="M208 154H297V170L220 190Z" fill="#7ba03c" />
      <path d="M132 357L297 305V392H132Z" fill="#c92a3f" />
      <path d="M258 318L297 305V392H282Z" fill="#b82638" />
      <path d="M58 384L132 357L145 392H58Z" fill="#1f0a20" />
    </g>
    <text x="178" y="313" fontFamily="Lato, sans-serif" fontWeight="900" fontSize="118" textAnchor="middle" fill="#15202a">S</text>
    <circle cx="280" cy="185" r="57" fill="#6a2010" opacity=".4" />
    <circle cx="279" cy="183" r="57" fill="#e9503d" />
    <circle cx="279" cy="188" r="9.500" fill="#fff" />
  </Icon>
);

const Preview = () => (
  <Icon cx={492}>
    <defs>
      <filter id="gravel" x="0" y="0" width="100%" height="100%">
        <feTurbulence type="fractalNoise" baseFrequency="0.35" numOctaves="2" seed="3" />
        <feColorMatrix values="0 0 0 0 0.25  0 0 0 0 0.17  0 0 0 0 0.08  3 0 0 0 -1.300" />
      </filter>
      <filter id="surf" x="0" y="0" width="100%" height="100%">
        <feTurbulence type="fractalNoise" baseFrequency="0.12 0.25" numOctaves="2" seed="5" />
        <feColorMatrix values="0 0 0 0 0.2  0 0 0 0 0.35  0 0 0 0 0.55  3 0 0 0 -1.550" />
      </filter>
      <clipPath id="shot"><path d="M369 215L568 185L592 342L393 373Z" /></clipPath>
    </defs>
    <rect x="393" y="158" width="218" height="190" fill="#fff" />
    <rect x="401" y="166" width="202" height="170" fill="#b8986a" />
    <rect x="401" y="166" width="202" height="170" filter="url(#gravel)" />
    <V id="va" c={["#7da7ee", "#d5e2f6"]} />
    <path d="M362 210L576 178L604 352L388 384Z" fill="#50381a" opacity=".5" />
    <path d="M360 208L574 176L602 348L387 381Z" fill="#fff" />
    <path d="M369 215L568 185L577 250L379 283Z" fill="url(#va)" />
    <path d="M379 283L577 250L584 290L388 320Z" fill="#2e4d90" />
    <path d="M383 318Q420 300 450 306Q500 290 584 286L592 342L393 373Z" fill="#dbe7ee" />
    <g clipPath="url(#shot)"><rect x="380" y="300" width="215" height="75" filter="url(#surf)" /></g>
    <path d="M386 310L410 300L425 306L455 312L440 320L400 318Z" fill="#5a4436" />
    <path d="M393 373Q402 345 425 338Q446 332 458 346Q480 342 496 357Z" fill="#7a5c3c" />
    <path d="M400 364L430 348L470 354" stroke="#4e3a28" strokeWidth="4" fill="none" />
    <linearGradient id="vb"><Stops c={["#5b5d60", "#a0a2a5", "#6a6c70", "#4a4c50"]} /></linearGradient>
    <path d="M519 305L526 375Q545 394 578 394Q612 392 624 374L631 305Z" fill="url(#vb)" />
    <circle cx="574" cy="301" r="54" fill="#4a4e54" />
    <circle cx="574" cy="301" r="50" fill="none" stroke="#c8ccd0" strokeWidth="5" />
    <circle cx="574" cy="304" r="44" fill="#b4bcc6" />
    <path d="M531 312Q550 306 574 314Q600 308 617 312Q612 346 574 348Q536 344 531 312Z" fill="#7c6650" />
    <path d="M540 290Q574 262 608 290L604 304L545 304Z" fill="#e4e9ee" opacity=".8" />
    <path d="M545 296Q574 280 602 294" fill="none" stroke="#6b7886" strokeWidth="5" />
  </Icon>
);

const DiskDoc = () => (
  <Icon cx={951}>
    <V id="da" c={["#cbd3d8", "#8b959c"]} />
    <path d="M857 404H1044V260Q1044 215 990 158L960 130H877V143H867V157H857Z" fill="#fdfdfd" />
    <path d="M867 157H960M877 143H950" stroke="#c9c9c9" strokeWidth="3" />
    <path d="M940 130L965 133V148L940 143Z" fill="#333" />
    <path d="M975 145Q1030 175 1040 232Q1020 212 978 213Q982 180 975 145Z" fill="#ededed" />
    <path d="M978 213Q1000 195 978 165M990 170Q1020 200 1038 230" stroke="#b4b4b4" strokeWidth="3" fill="none" />
    <path d="M903 246H999L1007 340V362H893V340Z" fill="url(#da)" />
    <path d="M893 345H1007V362H893Z" fill="#4d555b" />
    <path d="M945 348H980V358H945Z" fill="#15191c" />
    <rect x="914" y="252" width="55" height="13" fill="#2b3035" />
    <circle cx="951" cy="302" r="39" fill="none" stroke="#dfe5e9" strokeWidth="2.500" />
    <circle cx="951" cy="296" r="15" fill="#b4bec5" stroke="#e2e7ea" strokeWidth="2" />
  </Icon>
);

const Trash = () => (
  <Icon cx={1269}>
    <linearGradient id="ta"><Stops c={["#cfcfcf", "#efefef", "#e2e2e2", "#f2f2f2", "#c8c8c8"]} /></linearGradient>
    <ellipse cx="1268" cy="166" rx="104" ry="28" fill="#a9a49c" />
    <path d="M1180 152L1240 132L1262 150L1292 134L1325 155L1352 152L1358 176L1290 194L1210 190Z" fill="#e6e4e0" />
    <path d="M1190 160L1225 145L1240 155L1222 175Z" fill="#f8f8f8" />
    <path d="M1208 172L1240 158L1262 164L1244 190H1215Z" fill="#7d7a78" />
    <path d="M1216 174L1246 166L1240 186L1222 188Z" fill="#dedcd8" />
    <path d="M1230 160L1264 158L1256 172L1236 170Z" fill="#4fc9a8" />
    <path d="M1282 158L1304 150L1320 170L1300 186L1280 188Z" fill="#3a4a88" />
    <path d="M1296 162L1312 166L1300 176Z" fill="#d06030" />
    <path d="M1322 160L1346 154L1340 178L1322 182Z" fill="#a8a9ac" />
    <path d="M1164 166Q1190 196 1268 196Q1345 196 1373 166L1349 378Q1340 404 1268 404Q1197 404 1189 378Z" fill="url(#ta)" />
    <path d="M1164 166Q1190 196 1268 196Q1345 196 1373 166Q1372 150 1340 146M1164 166Q1166 152 1195 147" fill="none" stroke="#f4f4f4" strokeWidth="4" />
    <path d="M1240 236Q1300 240 1325 205Q1320 245 1265 244Z" fill="#f8f8f8" opacity=".8" />
    <path d="M1194 374Q1210 394 1268 394Q1330 394 1345 374" fill="none" stroke="#fff" strokeWidth="7" opacity=".8" />
  </Icon>
);

const apps: [React.FC, boolean?][] = [
  [Finder, true], [Siri], [Launchpad], [Safari], [Chrome, true], [Mail], [Contacts], [Calendar],
  [Notes], [Reminders], [Maps], [Photos], [Messages], [FaceTime], [ITunes], [IBooks], [AppStore],
  [Settings], [Orbit], [Terminal, true], [Sublime, true], [Slack, true], [Preview, true],
];

const menus: [string, number][] = [
  ["File", 82], ["Edit", 86], ["View", 100], ["History", 129],
  ["Bookmarks", 181], ["People", 125], ["Window", 140], ["Help", 80],
];

export default function App() {
  return (
    <Desktop>
      <Global />
      <Wallpaper width="2880" height="138" viewBox="0 0 2880 138">
        <defs>
          <filter id="wood" x="0" y="0" width="100%" height="100%">
            <feTurbulence type="fractalNoise" baseFrequency="0.022 0.280" numOctaves="4" seed="11" />
            <feColorMatrix values="0 0 0 0 0.05  0 0 0 0 0.03  0 0 0 0 0.01  3.200 0 0 0 -1.150" />
          </filter>
          <linearGradient id="plank" x1="0" y1="0" x2="1" y2="0">
            <stop offset="0" stopColor="#80574a" />
            <stop offset=".03" stopColor="#704b40" />
            <stop offset=".97" stopColor="#b8741e" />
            <stop offset="1" stopColor="#96701e" />
          </linearGradient>
          <linearGradient id="shade" x1="0" y1="0" x2="0" y2="1">
            <stop offset="0" stopColor="#000" stopOpacity=".7" />
            <stop offset=".3" stopColor="#000" stopOpacity=".1" />
            <stop offset="1" stopColor="#000" stopOpacity=".15" />
          </linearGradient>
        </defs>
        <rect width="2880" height="138" fill="url(#plank)" />
        <rect width="2880" height="138" filter="url(#wood)" />
        <rect width="2880" height="138" fill="url(#shade)" />
        <rect x="80" y="0" width="2716" height="10" fill="#1a0d04" />
      </Wallpaper>

      <MenuBar>
        <MenuLead><Apple /></MenuLead>
        <MenuItem $w={146} $bold>Chrome</MenuItem>
        {menus.map(([label, w]) => (
          <MenuItem key={label} $w={w}>{label}</MenuItem>
        ))}
        <StatusArea>
          <Status $w={202}><StatusGlyphs /></Status>
          <Status $w={56} $size={24} $ls={-0.6}>76%</Status>
          <Status $w={82}><Battery /></Status>
          <Status $w={186} $ls={-0.2}>Fri 11:26 AM</Status>
          <Status $w={212} $ls={-0.4}>Harry Lowson</Status>
          <Status $w={64}><Search /></Status>
          <Status $w={56}>
            <svg width="32" height="44" viewBox="642 107 234 330"><SiriArt /></svg>
          </Status>
          <Status $w={82}><MenuList /></Status>
        </StatusArea>
      </MenuBar>

      <Window>
        <TabStrip>
          <TrafficLights>
            <Light $fill="#ee6a5f" $edge="#d65549" />
            <Light $fill="#f5be4f" $edge="#dba63c" />
            <Light $fill="#62c655" $edge="#4dab3f" />
          </TrafficLights>
          <Tabs>
            <Tab $z={2}>
              <TabBody />
              <Favicon><Compass /></Favicon>
              <TabTitle $ls={-0.25}>Compass | Day: w02d5</TabTitle>
              <Cross />
            </Tab>
            <Tab $z={1}>
              <TabBody />
              <Favicon><Compass /></Favicon>
              <TabTitle $ls={-0.04} $fade>Compass | Submit Project for E</TabTitle>
              <Cross />
            </Tab>
            <Tab $z={3}>
              <TabBody active />
              <Favicon><Doc /></Favicon>
              <TabTitle $ls={-0.45}>TinyApp</TabTitle>
              <Cross />
            </Tab>
            <NewTab width="66" height="32" viewBox="0 0 66 32">
              <path d="M3.500 .7H49Q52.500 .7 53.500 3.500L63.500 28Q64.500 30.500 61.500 30.500H17Q13.500 30.500 12.500 28L1.500 3.500Q.7 .7 3.500 .7Z" fill="#cfcfcf" stroke="#9c9c9c" strokeWidth="1.200" />
            </NewTab>
          </Tabs>
          <Profile>
            <svg width="30" height="30" viewBox="0 0 30 30">
              <circle cx="15" cy="15" r="15" fill="#6c6c6c" />
              <ellipse cx="15" cy="9.500" rx="4.800" ry="5" fill="#d2d2d2" />
              <path d="M5.800 21Q8 17 15 17Q22 17 24.200 21Q20.500 26.500 15 26.500Q9.500 26.500 5.800 21Z" fill="#d2d2d2" />
            </svg>
          </Profile>
        </TabStrip>

        <Toolbar>
          <NavButton $w={185}>
            <svg width="185" height="40" viewBox="0 0 185 40" fill="none" strokeWidth="3">
              <path d="M49 20H25M36.500 8L24.500 20L36.500 32" stroke="#5e5e5e" />
              <path d="M79 20H103M92 8L104 20L92 32" stroke="#d2d2d2" />
              <path d="M159.300 24A11.500 11.500 0 1 1 157 12" stroke="#5e5e5e" />
              <path d="M162.500 7V18H151Z" fill="#5e5e5e" />
            </svg>
          </NavButton>
          <Omnibox>
            <svg width="28" height="28" viewBox="0 0 28 28">
              <circle cx="14" cy="14" r="12.300" fill="none" stroke="#5c5c5c" strokeWidth="2.300" />
              <path d="M12.800 12.500H15.200V21H12.800ZM12.800 7.500H15.200V10H12.800Z" fill="#5c5c5c" />
            </svg>
            <Address>localhost<Muted>:8080/login</Muted></Address>
            <Star />
          </Omnibox>
          <NavButton $w={72}>
            <svg width="72" height="40" viewBox="0 0 72 40" fill="#5a5a5a">
              <circle cx="36" cy="10" r="2.900" />
              <circle cx="36" cy="20" r="2.900" />
              <circle cx="36" cy="30" r="2.900" />
            </svg>
          </NavButton>
        </Toolbar>

        <Page>
          <Title>Tiny URL (ver 1.0.0)</Title>
          <Lead>login</Lead>
          <Form>
            <FieldRow><FieldName>username:</FieldName><Input type="text" /></FieldRow>
            <FieldRow><FieldName>password:</FieldName><Input type="password" /></FieldRow>
            <Submit type="button">enter</Submit>
          </Form>
          <Link>New here?</Link>
        </Page>
      </Window>

      <Dock>
        {apps.map(([Art, running], i) => (
          <DockSlot key={i}>
            <Art />
            {running && <Running />}
          </DockSlot>
        ))}
        <Divider />
        <DockSlot><DiskDoc /></DockSlot>
        <DockSlot><Trash /></DockSlot>
      </Dock>
    </Desktop>
  );
}
